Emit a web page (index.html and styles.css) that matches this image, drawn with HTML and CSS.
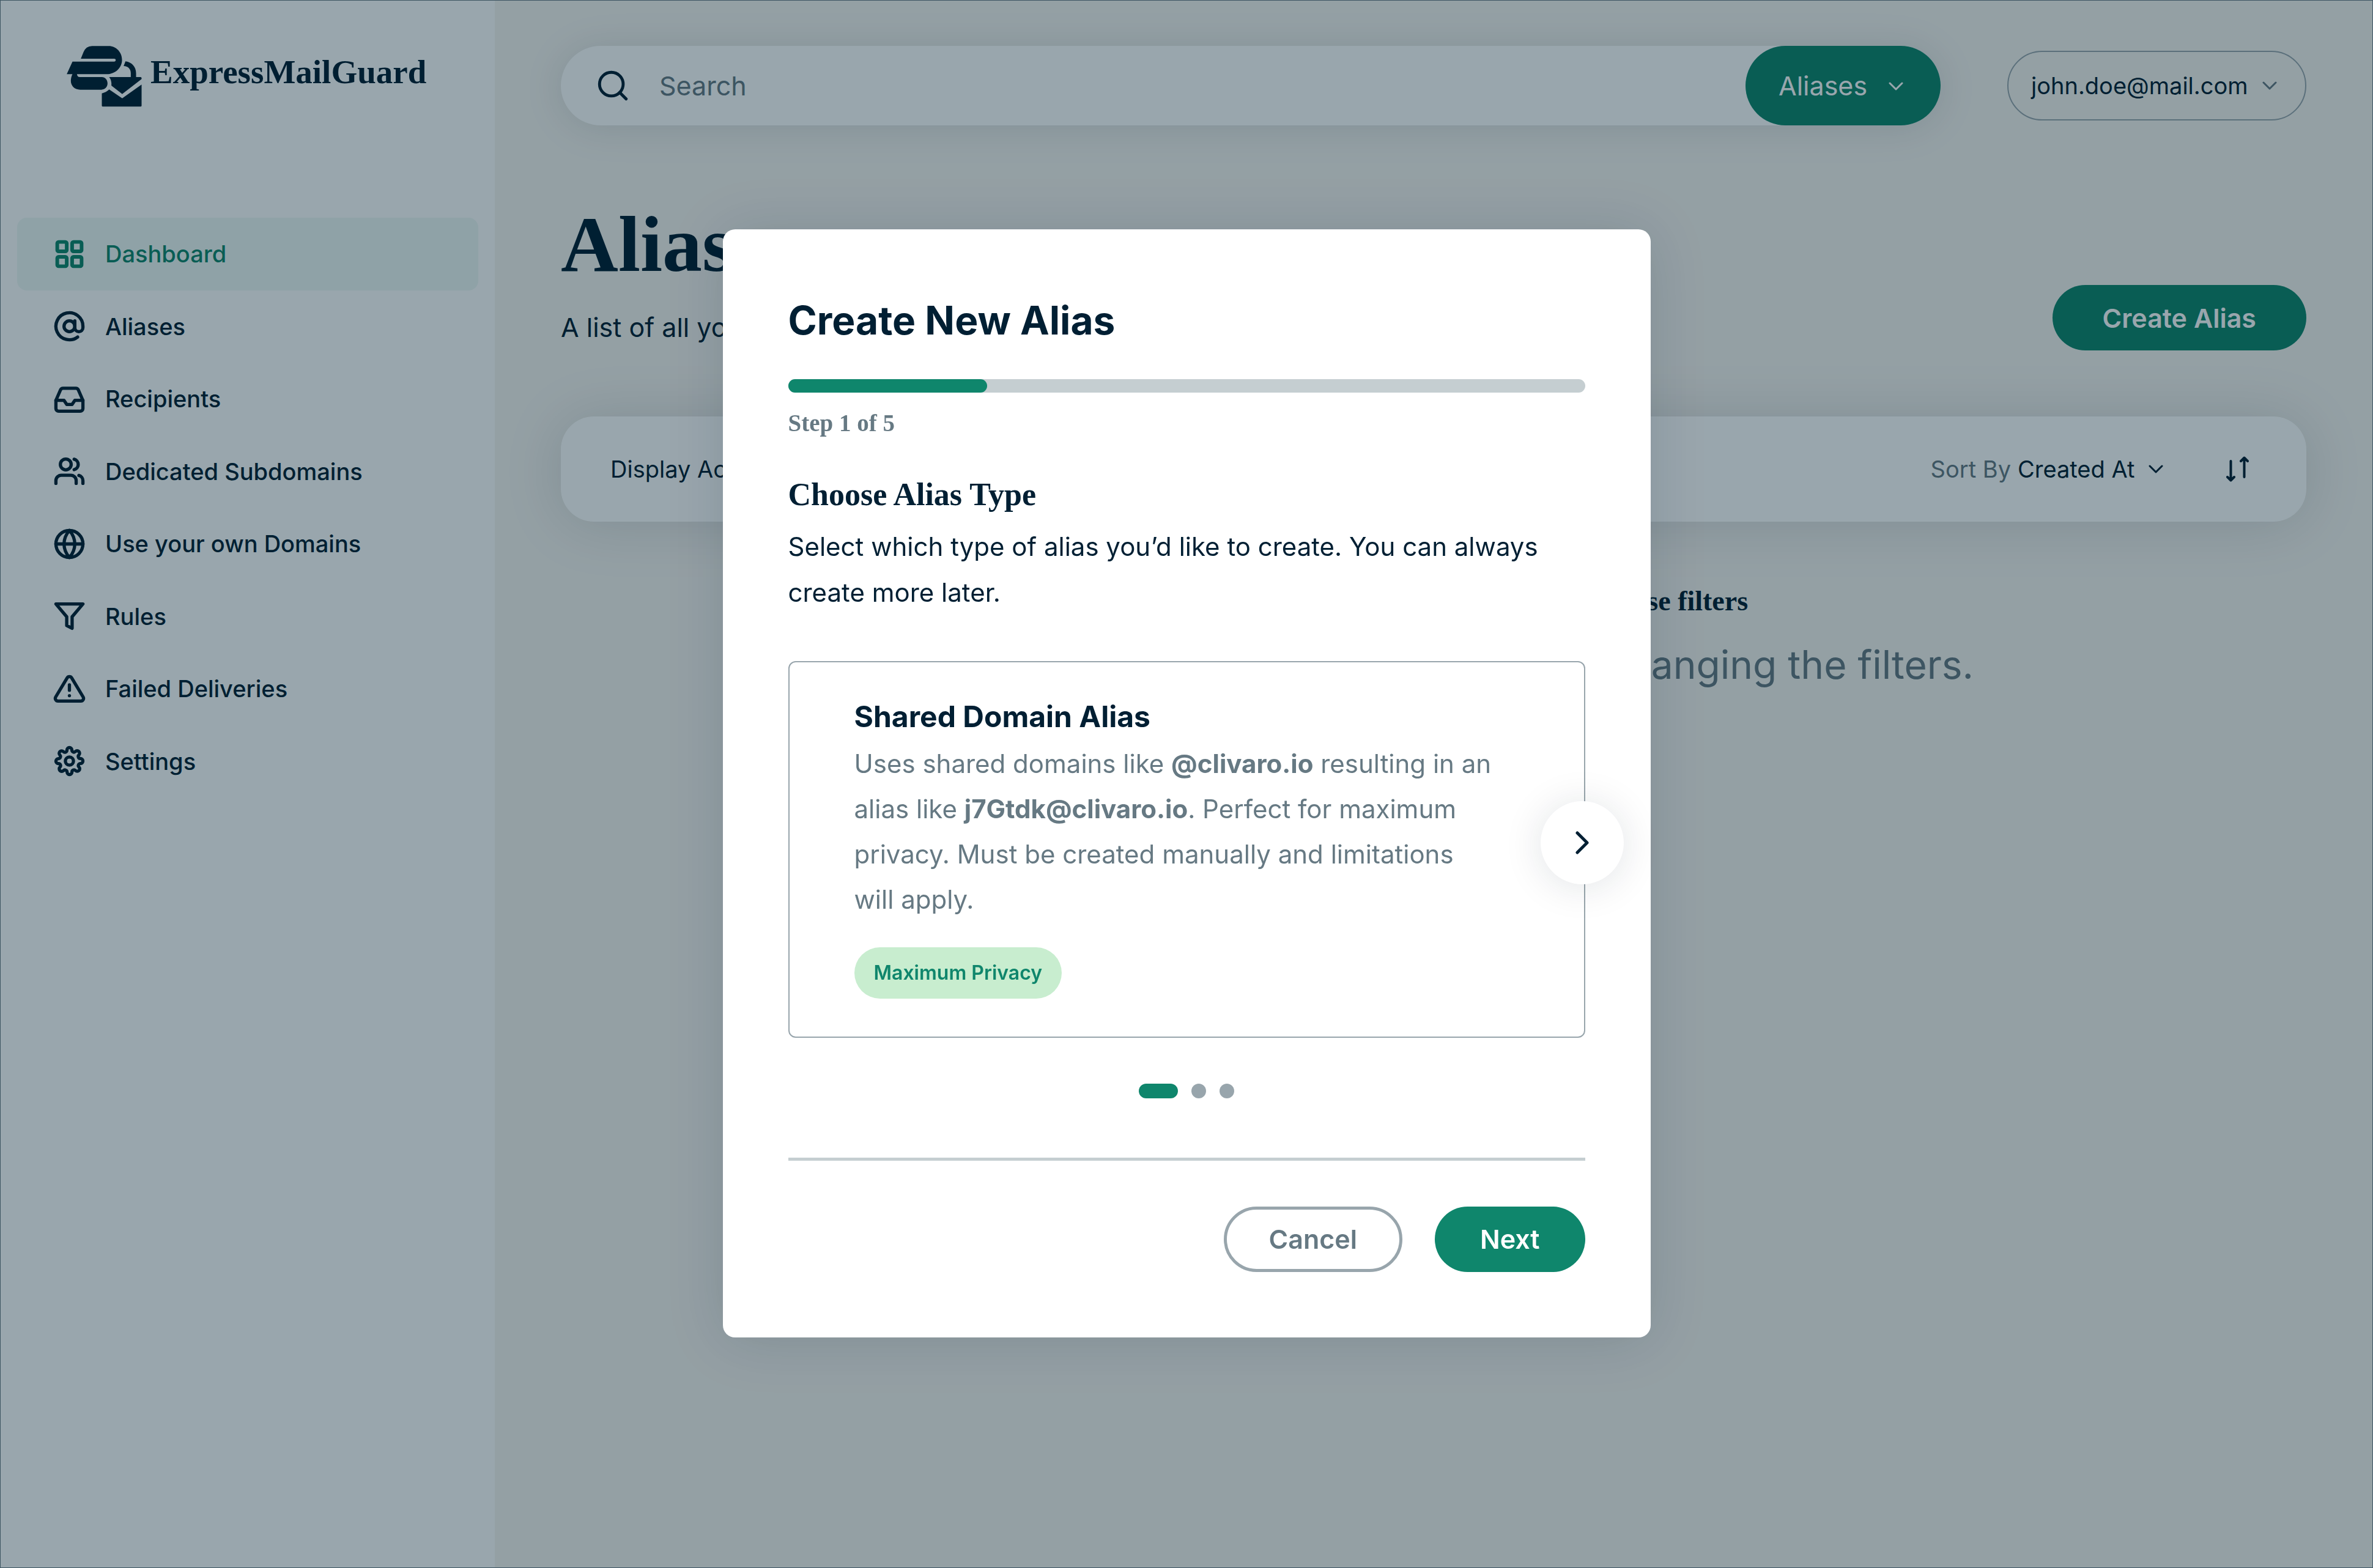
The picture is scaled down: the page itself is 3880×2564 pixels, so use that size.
FILE: index.html
```html
<!DOCTYPE html>
<html lang="en">
<head>
<meta charset="utf-8">
<title>ExpressMailGuard – Aliases</title>
<meta name="viewport" content="width=device-width, initial-scale=1">
<link rel="stylesheet" href="styles.css">
</head>
<body>
<div class="app">
  <aside class="sidebar">
    <a class="logo" href="#">
      <svg class="logo-mark" viewBox="26 26 368 300" aria-hidden="true">
        <path d="M95 89L108 57Q120 27 150 27H232C268 27 297 57 297 95C297 135 262 165 222 165H26L54 103H258Q266 103 266 96Q266 89 258 89Z"/>
        <path d="M54 164H76Q77 179 90 179H198C214 179 226 192 226 210C226 227 214 241 196 241H92C64 241 46 222 46 198C46 186 49 175 54 164Z"/>
        <path d="M314 102C346 106 366 130 366 160V181H340V160C340 140 328 126 305 125Z"/>
        <path d="M234 179H388Q393 179 393 184V189L298 262L245 221Q247 195 234 179Z"/>
        <path d="M234 240L298 283L393 216V319Q393 324 388 324H203Q198 324 198 319V259Q220 254 234 240Z"/>
      </svg>
      <span class="logo-name">ExpressMailGuard</span>
    </a>
    <nav class="nav" aria-label="Main">
      <a class="nav-item nav-item-active" href="#" aria-current="page">
        <svg class="icon icon-grid" viewBox="0 0 24 24" aria-hidden="true"><rect x="3" y="3" width="7" height="7" rx="1"/><rect x="14" y="3" width="7" height="7" rx="1"/><rect x="14" y="14" width="7" height="7" rx="1"/><rect x="3" y="14" width="7" height="7" rx="1"/></svg>
        Dashboard
      </a>
      <a class="nav-item" href="#">
        <svg class="icon" viewBox="0 0 24 24" aria-hidden="true"><circle cx="12" cy="12" r="4"/><path d="M16 8v5a3 3 0 0 0 6 0v-1a10 10 0 1 0-3.92 7.94"/></svg>
        Aliases
      </a>
      <a class="nav-item" href="#">
        <svg class="icon" viewBox="0 0 24 24" aria-hidden="true"><path d="M22 13h-6l-2 3h-4l-2-3H2"/><path d="M5.45 5.11L2 13v6a2 2 0 0 0 2 2h16a2 2 0 0 0 2-2v-6l-3.450-7.890A2 2 0 0 0 16.760 4H7.240a2 2 0 0 0-1.790 1.110z"/></svg>
        Recipients
      </a>
      <a class="nav-item" href="#">
        <svg class="icon" viewBox="0 0 24 24" aria-hidden="true"><path d="M17 21v-2a4 4 0 0 0-4-4H6a4 4 0 0 0-4 4v2"/><circle cx="9.300" cy="7" r="4"/><path d="M22 21v-2a4 4 0 0 0-3-3.870"/><path d="M15.500 3.130a4 4 0 0 1 0 7.750"/></svg>
        Dedicated Subdomains
      </a>
      <a class="nav-item" href="#">
        <svg class="icon" viewBox="0 0 24 24" aria-hidden="true"><circle cx="12" cy="12" r="10"/><path d="M2 12h20"/><path d="M12 2a15.300 15.300 0 0 1 4 10 15.300 15.300 0 0 1-4 10 15.300 15.300 0 0 1-4-10 15.300 15.300 0 0 1 4-10z"/></svg>
        Use your own Domains
      </a>
      <a class="nav-item" href="#">
        <svg class="icon" viewBox="0 0 24 24" aria-hidden="true"><path d="M22 3H2l8 9.460V19l4 2v-8.540L22 3z"/></svg>
        Rules
      </a>
      <a class="nav-item" href="#">
        <svg class="icon" viewBox="0 0 24 24" aria-hidden="true"><path d="M10.290 3.860L1.820 18a2 2 0 0 0 1.710 3h16.940a2 2 0 0 0 1.710-3L13.710 3.860a2 2 0 0 0-3.420 0z"/><path d="M12 9v4"/><path d="M12 17h.010"/></svg>
        Failed Deliveries
      </a>
      <a class="nav-item" href="#">
        <svg class="icon" viewBox="0 0 24 24" aria-hidden="true"><circle cx="12" cy="12" r="3"/><path stroke-width="2.600" transform="translate(1.090 1.090) scale(.909)" d="M19.400 15a1.650 1.650 0 0 0 .33 1.820l.06.06a2 2 0 0 1 0 2.830 2 2 0 0 1-2.830 0l-.06-.06a1.650 1.650 0 0 0-1.820-.33 1.650 1.650 0 0 0-1 1.510V21a2 2 0 0 1-2 2 2 2 0 0 1-2-2v-.09A1.650 1.650 0 0 0 9 19.400a1.650 1.650 0 0 0-1.820.33l-.06.06a2 2 0 0 1-2.830 0 2 2 0 0 1 0-2.830l.06-.06a1.650 1.650 0 0 0 .33-1.820 1.650 1.650 0 0 0-1.510-1H3a2 2 0 0 1-2-2 2 2 0 0 1 2-2h.09A1.650 1.650 0 0 0 4.600 9a1.650 1.650 0 0 0-.33-1.820l-.06-.06a2 2 0 0 1 0-2.830 2 2 0 0 1 2.830 0l.06.06a1.650 1.650 0 0 0 1.820.33H9a1.650 1.650 0 0 0 1-1.510V3a2 2 0 0 1 2-2 2 2 0 0 1 2 2v.09a1.650 1.650 0 0 0 1 1.510 1.650 1.650 0 0 0 1.820-.33l.06-.06a2 2 0 0 1 2.830 0 2 2 0 0 1 0 2.830l-.06.06a1.650 1.650 0 0 0-.33 1.820V9a1.650 1.650 0 0 0 1.510 1H21a2 2 0 0 1 2 2 2 2 0 0 1-2 2h-.09a1.650 1.650 0 0 0-1.510 1z"/></svg>
        Settings
      </a>
    </nav>
  </aside>

  <main class="main">
    <header class="topbar">
      <form class="search" role="search">
        <svg class="search-icon" viewBox="0 0 24 24" aria-hidden="true"><circle cx="11" cy="11" r="8"/><path d="M21 21l-4.350-4.350"/></svg>
        <input class="search-input" type="search" placeholder="Search" aria-label="Search">
        <div class="scope">
          <select class="scope-select" aria-label="Search in"><option>Aliases</option></select>
          <svg class="chevron scope-chevron" viewBox="0 0 24 14" aria-hidden="true"><path d="M2 2l10 10L22 2"/></svg>
        </div>
      </form>
      <button class="account" type="button">
        john.doe@mail.com
        <svg class="chevron" viewBox="0 0 24 14" aria-hidden="true"><path d="M2 2l10 10L22 2"/></svg>
      </button>
    </header>

    <div class="page-head">
      <div>
        <h1 class="page-title">Aliases</h1>
        <p class="page-text">A list of all your aliases</p>
      </div>
      <button class="button button-primary" type="button">Create Alias</button>
    </div>

    <div class="filters">
      <select class="filter-select" aria-label="Display"><option>Display Active</option></select>
      <div class="sort">
        <label class="sort-label" for="sort-by">Sort By</label>
        <select class="filter-select" id="sort-by"><option>Created At</option></select>
        <svg class="chevron" viewBox="0 0 24 14" aria-hidden="true"><path d="M2 2l10 10L22 2"/></svg>
      </div>
      <button class="sort-order" type="button" aria-label="Reverse sort order">
        <svg class="sort-icon" viewBox="0 0 38 42" aria-hidden="true"><path d="M7.500 8v31M2 34l5.500 5.500L13 34M29.500 34V3M24 8l5.500-5.500L35 8"/></svg>
      </button>
    </div>

    <section class="empty">
      <h2 class="empty-title">It looks like no aliases were found for all these filters</h2>
      <p class="empty-text">There is nothing to show you here, try changing the filters.</p>
    </section>
  </main>
</div>

<div class="overlay">
  <section class="modal" role="dialog" aria-modal="true" aria-labelledby="modal-title">
    <h2 class="modal-title" id="modal-title">Create New Alias</h2>
    <progress class="progress" value="25" max="100" aria-label="Step 1 of 5"></progress>
    <p class="step">Step 1 of 5</p>
    <h3 class="section-title">Choose Alias Type</h3>
    <p class="section-text">Select which type of alias you’d like to create. You can always create more later.</p>
    <div class="card">
      <h4 class="card-title">Shared Domain Alias</h4>
      <p class="card-text">Uses shared domains like <strong>@clivaro.io</strong> resulting in an alias like <strong>j7Gtdk@clivaro.io</strong>. Perfect for maximum privacy. Must be created manually and limitations will apply.</p>
      <span class="badge">Maximum Privacy</span>
      <button class="next-card" type="button" aria-label="Next type">
        <svg class="next-icon" viewBox="0 0 22 38" aria-hidden="true"><path d="M3 3l16 16L3 35"/></svg>
      </button>
    </div>
    <div class="dots">
      <button class="dot dot-active" type="button" aria-label="Type 1"></button>
      <button class="dot" type="button" aria-label="Type 2"></button>
      <button class="dot" type="button" aria-label="Type 3"></button>
    </div>
    <footer class="modal-footer">
      <button class="button button-outline" type="button">Cancel</button>
      <button class="button button-primary" type="button">Next</button>
    </footer>
  </section>
</div>
</body>
</html>
```
FILE: styles.css
```css
:root {
  --ink: #001f33;
  --muted: #667983;
  --line: #98a5ac;
  --pale: #c5ced1;
  --green: #0f866c;
  --sans: Inter, "Liberation Sans", sans-serif;
  --serif: "Liberation Serif", serif;
}

* {
  box-sizing: border-box;
}

body,
h1, h2, h3, h4, p {
  margin: 0;
}

body {
  font-family: var(--sans);
  font-size: 43px;
  color: var(--ink);
  background: #f7f5f1;
}

button,
input,
select {
  font: inherit;
  color: inherit;
  margin: 0;
  padding: 0;
  border: 0;
  background: none;
}

select {
  appearance: none;
}

svg {
  display: block;
  flex: none;
  fill: none;
  stroke: currentColor;
  stroke-linecap: round;
  stroke-linejoin: round;
}

.app {
  display: grid;
  grid-template-columns: 808px 1fr;
  min-height: 100vh;
  border: 1px solid var(--muted);
}

/* Sidebar */

.sidebar {
  padding: 74px 27px 0;
  background: #fff;
}

.logo {
  display: flex;
  align-items: center;
  gap: 14px;
  height: 100px;
  margin: 0 0 181px 81px;
  color: var(--ink);
  text-decoration: none;
}

.logo-mark {
  width: 123px;
  height: 100px;
  fill: currentColor;
  stroke: none;
}

.logo-name {
  padding-bottom: 14px;
  font: bold 55px/62px var(--serif);
}

.nav {
  display: grid;
  grid-auto-rows: 1fr;
  min-height: 948px;
}

.nav-item {
  display: flex;
  align-items: center;
  gap: 32px;
  padding-left: 59px;
  border-radius: 16px;
  font-size: 38px;
  font-weight: 500;
  color: var(--ink);
  text-decoration: none;
}

.nav-item-active {
  color: var(--green);
  background: #eef8f5;
}

.icon {
  width: 53px;
  height: 53px;
  stroke-width: 2.4;
}

.icon-grid {
  stroke-width: 2.7;
}

/* Top bar */

.main {
  padding: 74px 108px;
}

.topbar {
  display: flex;
  align-items: center;
  gap: 109px;
}

.search {
  display: flex;
  flex: 1;
  align-items: center;
  height: 130px;
  padding-left: 56px;
  border-radius: 65px;
  background: #fff;
  box-shadow: 0 4px 64px rgba(0, 31, 51, .12);
}

.search-icon {
  width: 58px;
  height: 58px;
  stroke-width: 2;
}

.search-input {
  flex: 1;
  min-width: 0;
  height: 100%;
  padding-left: 47px;
  outline: 0;
}

.search-input::placeholder {
  color: var(--muted);
  opacity: 1;
}

.scope {
  position: relative;
  height: 100%;
  border-radius: 65px;
  color: #fff;
  background: var(--green);
}

.scope-select {
  width: 319px;
  height: 100%;
  padding-left: 54px;
}

.chevron {
  width: 24px;
  height: 14px;
  stroke-width: 3;
}

.scope-chevron {
  position: absolute;
  top: 59px;
  right: 61px;
}

.account {
  display: flex;
  align-items: center;
  justify-content: space-between;
  width: 489px;
  height: 114px;
  padding: 0 46px 0 37px;
  border: 2px solid var(--line);
  border-radius: 57px;
  font-size: 38px;
}

.account .chevron {
  color: var(--muted);
}

/* Page heading */

.page-head {
  display: flex;
  align-items: flex-end;
  justify-content: space-between;
  margin: 122px 0 108px;
}

.page-title {
  margin-bottom: 26px;
  font: bold 130px/144px var(--serif);
}

.page-text {
  line-height: 76px;
}

.button {
  height: 107px;
  padding: 0 74px;
  border-radius: 54px;
  font-weight: 600;
}

.button-primary {
  color: #fff;
  background: var(--green);
}

.button-outline {
  padding: 0 69px;
  border: 5px solid var(--line);
  color: var(--muted);
}

.page-head .button {
  padding: 0 82px;
}

/* Filters */

.filters {
  display: flex;
  align-items: center;
  height: 172px;
  padding: 0 93px 0 81px;
  border-radius: 54px;
  background: #fff;
  box-shadow: 0 4px 96px rgba(0, 31, 51, .14);
  font-size: 38px;
}

.sort {
  display: flex;
  align-items: center;
  gap: 11px;
  margin-left: auto;
}

.sort-label {
  color: var(--muted);
}

.sort .chevron {
  margin-left: 11px;
}

.sort-order {
  margin-left: 103px;
}

.sort-icon {
  width: 38px;
  height: 42px;
  stroke-width: 4;
}

/* Empty list */

.empty {
  padding-top: 102px;
  text-align: center;
}

.empty-title {
  margin-bottom: 36px;
  font: bold 46px/56px var(--serif);
}

.empty-text {
  font-size: 64px;
  line-height: 80px;
  color: var(--muted);
}

/* Dialog */

.overlay {
  position: fixed;
  inset: 0;
  display: flex;
  align-items: center;
  justify-content: center;
  padding-bottom: 3px;
  background: rgba(0, 32, 51, .4);
}

.modal {
  width: 1517px;
  padding: 107px;
  border-radius: 20px;
  background: #fff;
  box-shadow: 0 4px 96px rgba(0, 31, 51, .14);
}

.modal-title {
  margin-bottom: 54px;
  font-size: 64px;
  line-height: 84px;
}

.progress {
  display: block;
  appearance: none;
  width: 100%;
  height: 22px;
  margin-bottom: 26px;
  border: 0;
}

.progress::-webkit-progress-bar {
  border-radius: 11px;
  background: var(--pale);
}

.progress::-webkit-progress-value {
  border-radius: 11px;
  background: var(--green);
}

.step {
  margin-bottom: 61px;
  font: bold 39px/48px var(--serif);
  color: var(--muted);
}

.section-title {
  margin-bottom: 15px;
  font: bold 52px/64px var(--serif);
}

.section-text {
  margin-bottom: 75px;
  font-size: 42px;
  line-height: 75px;
}

.card {
  position: relative;
  padding: 59px 144px 62px 106px;
  border: 2px solid var(--line);
  border-radius: 12px;
}

.card-title {
  margin-bottom: 10px;
  font-size: 48px;
  line-height: 60px;
}

.card-text {
  margin-bottom: 41px;
  font-size: 42px;
  line-height: 74px;
  color: var(--muted);
}

.badge {
  display: block;
  width: fit-content;
  padding: 0 32px;
  border-radius: 43px;
  font-size: 32px;
  font-weight: 600;
  line-height: 84px;
  color: var(--green);
  background: #c8edcf;
}

.next-card {
  position: absolute;
  top: 227px;
  right: -65px;
  display: grid;
  place-items: center;
  width: 136px;
  height: 136px;
  border-radius: 50%;
  background: #fff;
  box-shadow: 0 4px 64px rgba(0, 31, 51, .12);
}

.next-icon {
  width: 22px;
  height: 38px;
  stroke-width: 5;
}

.dots {
  display: flex;
  justify-content: center;
  gap: 22px;
  margin: 75px 0 97px;
}

.dot {
  width: 24px;
  height: 24px;
  border-radius: 12px;
  background: var(--line);
}

.dot-active {
  width: 64px;
  background: var(--green);
}

.modal-footer {
  display: flex;
  justify-content: flex-end;
  gap: 53px;
  padding-top: 75px;
  border-top: 5px solid var(--pale);
}
```
